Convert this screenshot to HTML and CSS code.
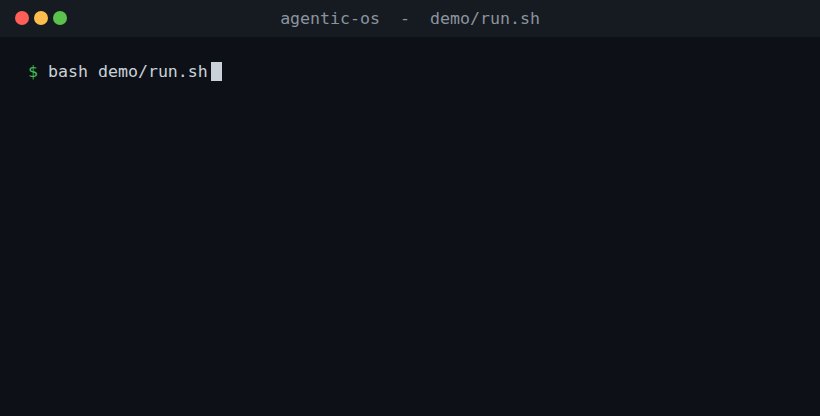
FILE: index.html
```html
<!DOCTYPE html>
<html>
<head>
<meta charset="utf-8">
<link rel="stylesheet" href="styles.css">
</head>
<body>
<div class="window">
  <div class="titlebar">
    <div class="lights">
      <span class="light red"></span>
      <span class="light yellow"></span>
      <span class="light green"></span>
    </div>
    <div class="title">agentic-os&nbsp;&nbsp;-&nbsp;&nbsp;demo/run.sh</div>
  </div>
  <div class="term">
    <div class="line"><span class="prompt">$</span> bash demo/run.sh<span class="cursor"></span></div>
  </div>
</div>
</body>
</html>
```
FILE: styles.css
```css
html, body {
  margin: 0;
  padding: 0;
  background: #0d1117;
}
.window {
  width: 820px;
  height: 416px;
  background: #0d1117;
  font-family: "DejaVu Sans Mono", "Liberation Mono", monospace;
  font-size: 16.6px;
}
.titlebar {
  position: relative;
  height: 37px;
  background: #161b22;
  display: flex;
  align-items: center;
  justify-content: center;
}
.lights {
  position: absolute;
  left: 15px;
  top: 11px;
  display: flex;
  gap: 5px;
}
.light {
  width: 14px;
  height: 14px;
  border-radius: 50%;
  display: block;
}
.red { background: #ff5f57; }
.yellow { background: #febc4e; }
.green { background: #5bc24d; }
.title {
  color: #8b949e;
  white-space: pre;
}
.term {
  padding: 24px 0 0 28px;
  color: #c9d1d9;
}
.line {
  display: flex;
  align-items: center;
  height: 20px;
  white-space: pre;
}
.prompt { color: #3fb950; }
.cursor {
  display: inline-block;
  width: 11px;
  height: 19px;
  background: #c9d1d9;
  margin-left: 3px;
}
```
